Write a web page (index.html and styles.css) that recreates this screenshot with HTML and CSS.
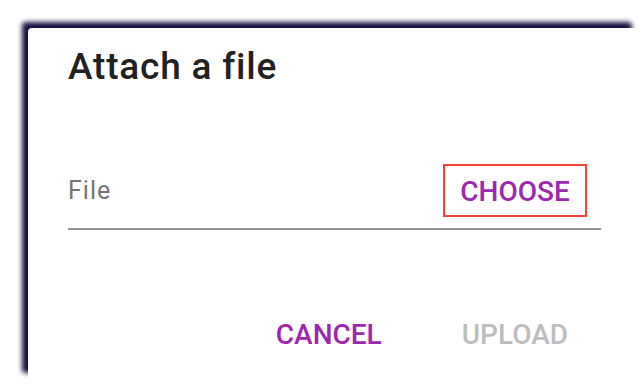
FILE: index.html
```html
<!DOCTYPE html>
<html>
<head>
<meta charset="utf-8">
<link rel="stylesheet" href="styles.css">
</head>
<body>
<div class="dialog">
  <h1 class="title">Attach a file</h1>
  <div class="field">
    <span class="label">File</span>
    <button class="choose">CHOOSE</button>
  </div>
  <div class="actions">
    <button class="btn cancel">CANCEL</button>
    <button class="btn upload">UPLOAD</button>
  </div>
</div>
</body>
</html>
```
FILE: styles.css
```css
html, body {
  margin: 0;
  padding: 0;
  background: #ffffff;
  font-family: Roboto, "Noto Sans", sans-serif;
}
body {
  width: 644px;
  height: 384px;
  overflow: hidden;
}
.dialog {
  margin: 28px 0 0 28px;
  width: 610px;
  height: 351px;
  box-sizing: border-box;
  padding: 18px 37px 0 40px;
  background: #ffffff;
  border-radius: 4px;
  box-shadow: -6px -6px 5px rgb(26, 16, 66);
}
.title {
  margin: 0;
  font-size: 37px;
  line-height: 42px;
  font-weight: 500;
  letter-spacing: 0.8px;
  color: #212121;
}
.field {
  margin-top: 76px;
  display: flex;
  align-items: flex-start;
  justify-content: space-between;
  padding-bottom: 11px;
  border-bottom: 2px solid #949494;
}
.label {
  font-size: 25px;
  line-height: 53px;
  letter-spacing: 1px;
  color: #757575;
}
.choose {
  margin-right: 14px;
  width: 144px;
  font-family: inherit;
  font-size: 28px;
  font-weight: 500;
  color: #9c27b0;
  background: none;
  border: 2px solid #f44336;
  padding: 3px 0 0 0;
  text-align: center;
  line-height: 46px;
  height: 53px;
  box-sizing: border-box;
}
.actions {
  margin-top: 85px;
  display: flex;
  justify-content: flex-end;
  gap: 80px;
  padding-right: 33px;
}
.btn {
  font-family: inherit;
  font-size: 28px;
  font-weight: 500;
  line-height: 40px;
  background: none;
  border: none;
  padding: 0;
}
.cancel { color: #9c27b0; }
.upload { color: #bdbdbd; }
```
